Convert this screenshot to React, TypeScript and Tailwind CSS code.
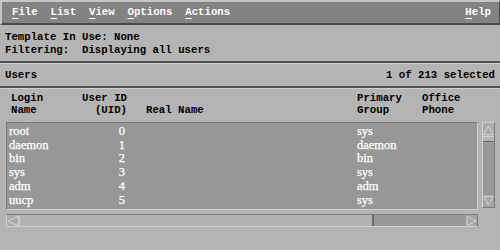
import React from "react";

const mono = { fontFamily: '"Liberation Mono", "DejaVu Sans Mono", monospace' };
const serif = { fontFamily: '"Liberation Serif", "DejaVu Serif", serif' };

function M({ t }: { t: string }) {
  return (
    <span>
      <span className="underline decoration-1 underline-offset-[3px]">{t[0]}</span>
      {t.slice(1)}
    </span>
  );
}

const rows = [
  ["root", "0", "sys"],
  ["daemon", "1", "daemon"],
  ["bin", "2", "bin"],
  ["sys", "3", "sys"],
  ["adm", "4", "adm"],
  ["uucp", "5", "sys"],
];

function Arrow({ dir }: { dir: "up" | "down" | "left" | "right" }) {
  const pts: Record<string, string> = {
    up: "6,1.5 11,11 1,11",
    down: "1,1 11,1 6,10.5",
    left: "1,6 11,1 11,11",
    right: "1,1 11,6 1,11",
  };
  return (
    <svg width="12" height="12" viewBox="0 0 12 12" className="block">
      <polygon points={pts[dir]} fill="#a8a8a8" stroke="#d6d6d6" strokeWidth="1" />
    </svg>
  );
}

export default function App() {
  return (
    <div className="w-[500px] h-[250px] bg-[#b4b4b4] text-black overflow-hidden flex flex-col" style={mono}>
      {/* menu bar */}
      <div className="h-[25px] shrink-0 bg-[#838383] border-t-2 border-l-2 border-[#c6c6c6] border-b-2 border-b-[#4a4a4a] border-r border-r-[#4a4a4a] flex items-center justify-between pl-[10px] pr-[8px] text-white font-bold text-[10.7px] whitespace-pre">
        <div>
          <M t="File" />{"  "}<M t="List" />{"  "}<M t="View" />{"  "}<M t="Options" />{"  "}<M t="Actions" />
        </div>
        <div>
          <M t="Help" />
        </div>
      </div>

      {/* info */}
      <div className="h-[36px] shrink-0 pl-[5px] pt-[6px] font-bold text-[10.7px] leading-[13px] whitespace-pre">
        <div>Template In Use: None</div>
        <div>Filtering:  Displaying all users</div>
      </div>
      <div className="h-[2px] shrink-0 bg-[#4e4e4e]" />
      <div className="h-[1px] shrink-0 bg-[#d0d0d0]" />

      {/* users row */}
      <div className="h-[22px] shrink-0 flex items-center justify-between pl-[5px] pr-[5px] font-bold text-[10.7px]">
        <span>Users</span>
        <span>1 of 213 selected</span>
      </div>
      <div className="h-[2px] shrink-0 bg-[#4e4e4e]" />
      <div className="h-[1px] shrink-0 bg-[#d0d0d0]" />

      {/* header */}
      <div className="h-[33px] shrink-0 flex pl-[11px] pt-[3px] font-bold text-[10.7px] leading-[12px] whitespace-pre">
        <div className="w-[60px]">
          <div>Login</div>
          <div>Name</div>
        </div>
        <div className="w-[56px] text-right">
          <div>User ID</div>
          <div>(UID)</div>
        </div>
        <div className="w-[230px] pl-[19px]">
          <div>&nbsp;</div>
          <div>Real Name</div>
        </div>
        <div className="w-[65px]">
          <div>Primary</div>
          <div>Group</div>
        </div>
        <div>
          <div>Office</div>
          <div>Phone</div>
        </div>
      </div>

      {/* list + vscroll */}
      <div className="flex shrink-0 pl-[6px] h-[89px]">
        <div className="w-[472px] h-[88px] bg-[#979797] border border-t-[#7a7a7a] border-l-[#7a7a7a] border-r-[#cdcdcd] border-b-[#cdcdcd] pl-[2px] pt-[2px] text-white text-[12.5px] leading-[13.7px]" style={{ ...serif, WebkitTextStroke: "0.25px white" }}>
          {rows.map((r) => (
            <div key={r[0]} className="flex">
              <div className="w-[62px]">{r[0]}</div>
              <div className="w-[54px] text-right">{r[1]}</div>
              <div className="w-[232px]" />
              <div>{r[2]}</div>
            </div>
          ))}
        </div>
        <div className="ml-[4px] w-[13px] h-[86px] border border-t-[#d0d0d0] border-l-[#d0d0d0] border-r-[#7a7a7a] border-b-[#7a7a7a] bg-[#989898] flex flex-col">
          <div className="h-[13px] bg-[#acacac] flex items-center justify-center">
            <Arrow dir="up" />
          </div>
          <div className="h-[6px] bg-[#b4b4b4] border-t border-[#d0d0d0] border-b border-b-[#6a6a6a]" />
          <div className="flex-1" />
          <div className="h-[12px] bg-[#a6a6a6] flex items-center justify-center">
            <Arrow dir="down" />
          </div>
        </div>
      </div>

      {/* hscroll */}
      <div className="pl-[6px] pt-[3px] shrink-0">
        <div className="w-[472px] h-[13px] flex border border-t-[#7a7a7a] border-l-[#d0d0d0] border-b-[#d0d0d0] border-r-[#7a7a7a] bg-[#989898]">
          <div className="w-[12px] bg-[#acacac] flex items-center justify-center">
            <Arrow dir="left" />
          </div>
          <div className="w-[355px] bg-[#b2b2b2] border-l border-[#d0d0d0] border-r-2 border-r-[#6a6a6a]" />
          <div className="flex-1" />
          <div className="w-[11px] bg-[#a6a6a6] flex items-center justify-center">
            <Arrow dir="right" />
          </div>
        </div>
      </div>
    </div>
  );
}
